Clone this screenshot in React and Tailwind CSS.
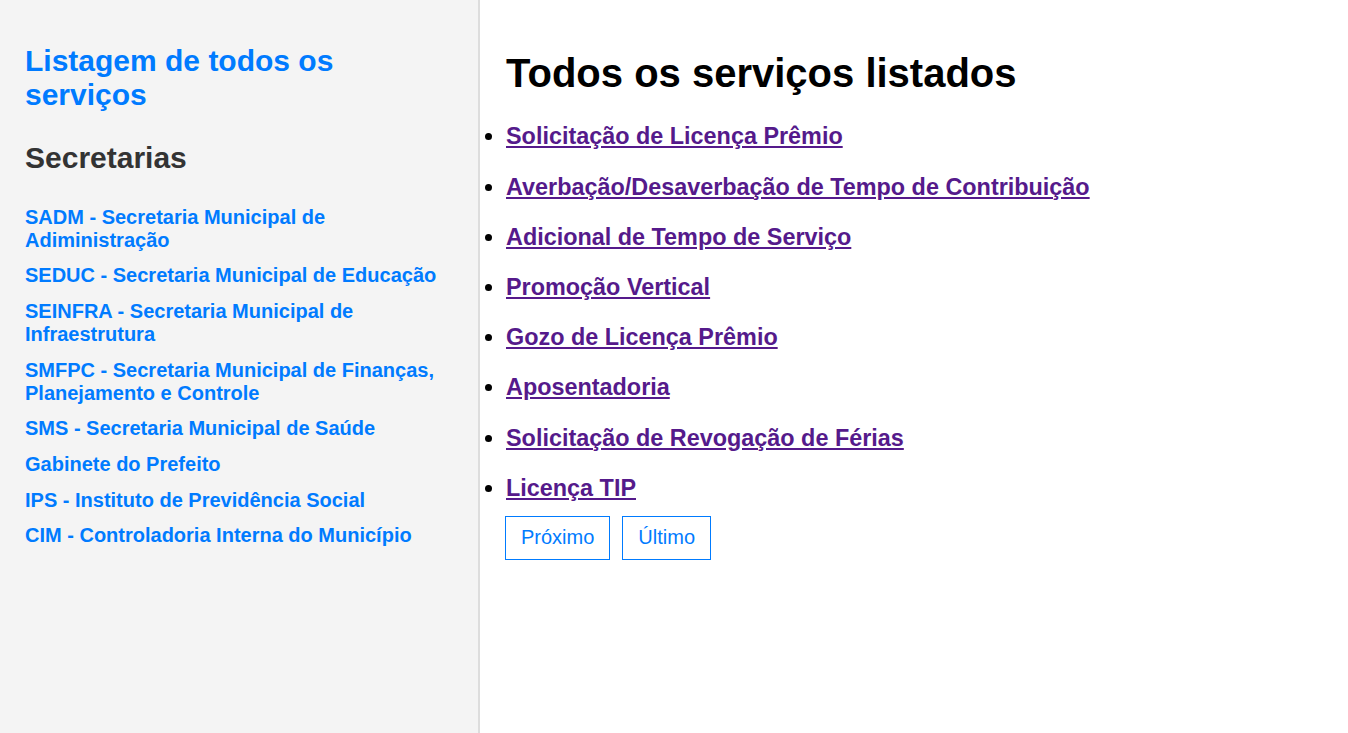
import React from "react";

const secretarias = [
  "SADM - Secretaria Municipal de Adiministração",
  "SEDUC - Secretaria Municipal de Educação",
  "SEINFRA - Secretaria Municipal de Infraestrutura",
  "SMFPC - Secretaria Municipal de Finanças, Planejamento e Controle",
  "SMS - Secretaria Municipal de Saúde",
  "Gabinete do Prefeito",
  "IPS - Instituto de Previdência Social",
  "CIM - Controladoria Interna do Município",
];

const servicos = [
  "Solicitação de Licença Prêmio",
  "Averbação/Desaverbação de Tempo de Contribuição",
  "Adicional de Tempo de Serviço",
  "Promoção Vertical",
  "Gozo de Licença Prêmio",
  "Aposentadoria",
  "Solicitação de Revogação de Férias",
  "Licença TIP",
];

export default function App() {
  return (
    <div className="flex min-h-[733px] font-['Liberation_Sans',Arial,sans-serif]">
      <aside className="w-[480px] shrink-0 bg-[#f4f4f4] border-r-2 border-[#dddddd] pl-[25px] pr-[10px] pt-[44px]">
        <h2 className="w-[400px] text-[30px] font-bold leading-[34px] text-[#007bff]">
          Listagem de todos os serviços
        </h2>
        <h3 className="mt-[29px] text-[30px] font-bold leading-[34.5px] text-[#333333]">
          Secretarias
        </h3>
        <ul className="mt-[30px] w-[436px]">
          {secretarias.map((s) => (
            <li key={s} className="mb-[12.7px] text-[20px] leading-[23px]">
              <a href="#" className="font-bold text-[#007bff]">
                {s}
              </a>
            </li>
          ))}
        </ul>
      </aside>
      <main className="flex-1 bg-white pl-[26px] pt-[50px]">
        <h1 className="text-[40px] font-bold leading-[46px] text-black">
          Todos os serviços listados
        </h1>
        <ul className="mt-[15.8px] list-disc list-outside text-black">
          {servicos.map((s) => (
            <li key={s} className="py-[11.6px] text-[23.4px] leading-[27px]">
              <a href="#" className="font-bold text-[#551a8b] underline">
                {s}
              </a>
            </li>
          ))}
        </ul>
        <div className="mt-[2.6px] flex gap-[12px] -ml-px">
          <button className="h-[44px] border border-[#007bff] px-[15px] text-[20px] leading-[23px] text-[#007bff]">
            Próximo
          </button>
          <button className="h-[44px] border border-[#007bff] px-[15px] text-[20px] leading-[23px] text-[#007bff]">
            Último
          </button>
        </div>
      </main>
    </div>
  );
}
